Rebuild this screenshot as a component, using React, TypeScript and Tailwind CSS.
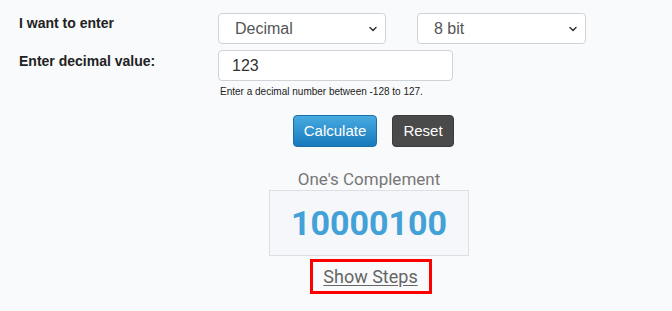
import { ChevronDown } from "lucide-react";

const SELECTS = [
  { value: "Decimal", options: ["Decimal", "Binary", "Hexadecimal"], width: "w-[168px]" },
  { value: "8 bit", options: ["4 bit", "8 bit", "16 bit", "32 bit"], width: "w-[169px]" },
];

function Select({ value, options, width }: { value: string; options: string[]; width: string }) {
  return (
    <div className={`relative ${width} h-[31px]`}>
      <select
        defaultValue={value}
        className="appearance-none w-full h-full rounded-[4px] border border-[#cfd3d8] bg-white pl-[16px] pr-8 text-[16px] text-[#555] outline-none"
      >
        {options.map((o) => (
          <option key={o}>{o}</option>
        ))}
      </select>
      {/* chevron overlay */}
      <ChevronDown
        className="pointer-events-none absolute right-[7px] top-[10px] w-[12px] h-[12px] text-[#333]"
        strokeWidth={3}
      />
    </div>
  );
}

export default function App() {
  return (
    <div className="w-[672px] h-[311px] bg-[#f9fafb] font-['Liberation_Sans',Arial,sans-serif] text-[#222] overflow-hidden">
      {/* Form rows */}
      <div className="flex pt-[13px]">
        <label className="w-[218px] shrink-0 pl-[19px] pt-[2px] text-[14px] leading-[16px] font-bold">
          I want to enter
        </label>
        <div className="flex gap-[31px]">
          {SELECTS.map((s) => (
            <Select key={s.value} {...s} />
          ))}
        </div>
      </div>

      <div className="flex pt-[6px]">
        <label className="w-[218px] shrink-0 pl-[19px] pt-[3px] text-[14px] leading-[16px] font-bold">
          Enter decimal value:
        </label>
        <div className="flex flex-col">
          <input
            defaultValue="123"
            className="w-[235px] h-[31px] rounded-[4px] border border-[#cfd3d8] bg-white px-[13px] text-[16px] text-[#333] outline-none"
          />
          <p className="pl-[2px] pt-[5px] text-[10px] leading-[12px] text-[#222]">
            Enter a decimal number between -128 to 127.
          </p>
        </div>
      </div>

      {/* Buttons */}
      <div className="flex gap-[15px] pl-[293px] pt-[17px]">
        <button className="w-[84px] h-[32px] rounded-[4px] border border-[#1b6ea8] bg-gradient-to-b from-[#46abe0] to-[#1879bd] text-[15px] text-white">
          Calculate
        </button>
        <button className="w-[62px] h-[32px] rounded-[4px] border border-[#3b3b3b] bg-[#4a4a4a] text-[15px] text-white">
          Reset
        </button>
      </div>

      {/* Result */}
      <div className="ml-[269px] w-[200px] flex flex-col items-center pt-[22px] font-['Roboto',sans-serif]">
        <p className="text-[17px] leading-[20px] text-[#777]">One's Complement</p>
        <div className="mt-[1px] w-[200px] h-[66px] flex items-center justify-center border border-[#dcdfe5] bg-[#f6f7fa]">
          <span className="text-[34px] font-bold text-[#42a1d6] leading-none">10000100</span>
        </div>
        <div className="mt-[3px] ml-[3px] w-[122px] h-[35px] border-[3px] border-[#ff0000] flex items-center justify-center">
          <a href="#" className="text-[18px] leading-[20px] text-[#666] underline underline-offset-[2px]">
            Show Steps
          </a>
        </div>
      </div>
    </div>
  );
}
